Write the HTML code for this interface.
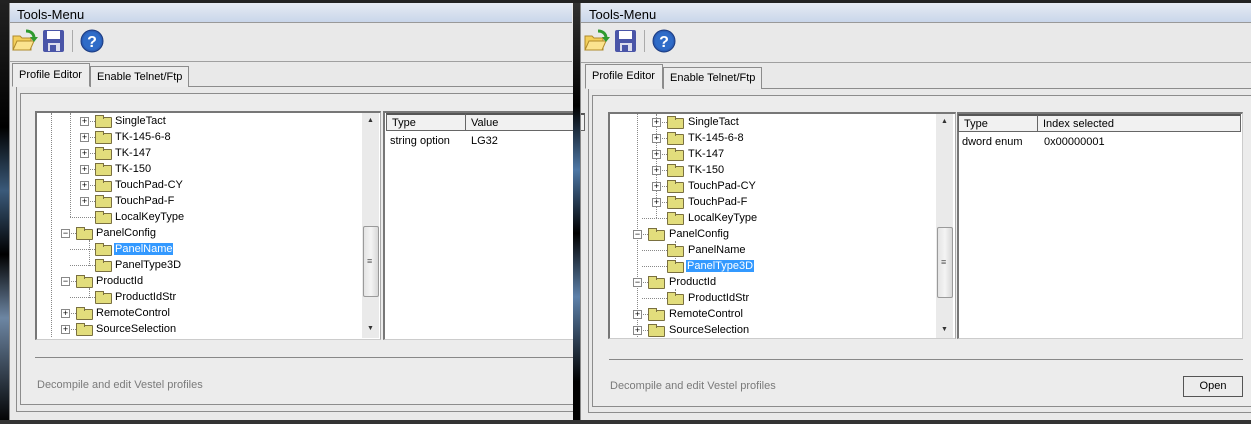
<!DOCTYPE html>
<html><head><meta charset="utf-8"><style>
*{margin:0;padding:0;box-sizing:border-box}
body{width:1251px;height:424px;overflow:hidden;background:#e9e9e9;font-family:"Liberation Sans",Arial,sans-serif;font-size:11px;color:#000;position:relative}
.a{position:absolute}
.title{height:20px;background:linear-gradient(#e6ebf3,#c9d6ea);border-bottom:1px solid #999;font-size:13px;padding:4px 0 0 7px}
.line{height:1px;background:#a0a0a0}
.tab{border:1px solid #8c8c8c;border-bottom:none;background:#ececec;font-size:11px;padding:5px 6px 0 6px;height:22px;white-space:nowrap}
.box{border:1px solid #8c8c8c;background:#e9e9e9}
.tree{background:#fff;border:2px solid #777;border-right:1px solid #aaa;border-bottom:1px solid #ccc;overflow:hidden}
.row{position:absolute;height:16px;line-height:16px;white-space:nowrap}
.pm{position:absolute;width:9px;height:9px;border:1px solid #888;background:#fff;top:4px;font-size:9px;line-height:7px;text-align:center;color:#000}
.fo{position:absolute;width:17px;height:11px;top:4px;background:#e2dd7c;border:1px solid #7a7040;border-radius:1px}
.fo:before{content:"";position:absolute;left:-1px;top:-3px;width:7px;height:3px;background:#e2dd7c;border:1px solid #7a7040;border-bottom:none}
.sel{background:#3399ff;color:#fff;padding:0 1px}
.dv{position:absolute;border-left:1px dotted #888}
.dh{position:absolute;border-top:1px dotted #888;height:0}
.sb{position:absolute;background:#eaeaea}
.thumb{position:absolute;background:linear-gradient(90deg,#e4e4e4,#f4f4f4,#d8d8d8);border:1px solid #9a9a9a;border-radius:2px}
.hdr{position:absolute;height:18px;background:#f1f1f1;border:1px solid #666;border-top:2px solid #555;padding:2px 5px;font-size:11px;white-space:nowrap}
.list{background:#fff;border:2px solid #777;border-right:1px solid #ccc;border-bottom:1px solid #ccc;overflow:hidden}
.st{color:#7a7a7a;font-size:11px}
</style></head><body>

<!-- LEFT WINDOW -->
<div class="a" style="left:9px;top:0;width:563px;height:421px;overflow:hidden;border-left:1px solid #888">
 <div class="a title" style="left:0;top:3px;width:600px">Tools-Menu</div>
</div>
<div class="a line" style="left:10px;top:61px;width:562px"></div>
<svg class="a" style="left:12px;top:28px" width="100" height="26" viewBox="0 0 100 26">
 <path d="M1 8h7l2 2h9v12H1z" fill="#f3cf5a" stroke="#b08a2a"/><path d="M1 22l4-9h17l-4 9z" fill="#fbe38e" stroke="#b08a2a"/>
 <path d="M14 3c5 0 8 3 8 7" fill="none" stroke="#2f9a2f" stroke-width="3"/><path d="M18 9l4 5 4-5z" fill="#2f9a2f"/>
 <rect x="31" y="2" width="21" height="22" rx="2" fill="#4a55a8"/><rect x="35" y="3" width="13" height="8" fill="#fff"/><rect x="36" y="15" width="12" height="8" fill="#dde"/><rect x="38" y="17" width="6" height="6" fill="#4a55a8"/>
 <rect x="60" y="2" width="1" height="22" fill="#aaa"/>
 <circle cx="80" cy="13" r="11" fill="#2b5fb8" stroke="#1a3a80"/><circle cx="80" cy="13" r="9" fill="#2f6cc8"/>
 <text x="80" y="19" text-anchor="middle" fill="#fff" font-size="16" font-weight="bold" font-family="Liberation Sans">?</text>
</svg>
<div class="a box" style="left:16px;top:86px;width:560px;height:326px"></div>
<div class="a box" style="left:20px;top:93px;width:556px;height:312px;background:#ececec"></div>
<div class="a tab" style="left:12px;top:63px;width:78px;height:24px;background:#ededed;z-index:2;border-bottom:1px solid #ededed">Profile Editor</div>
<div class="a tab" style="left:90px;top:66px;width:99px;height:21px;padding-top:4px">Enable Telnet/Ftp</div>
<div class="a tree" style="left:35px;top:111px;width:346px;height:229px"></div>
<div class="a list" style="left:383px;top:111px;width:195px;height:229px"></div>
<div class="hdr" style="left:386px;top:113px;width:80px">Type</div>
<div class="hdr" style="left:465px;top:113px;width:120px">Value</div>
<div class="a" style="left:390px;top:135px">string option</div>
<div class="a" style="left:471px;top:135px">LG32</div>
<div class="sb" style="left:362px;top:113px;width:17px;height:225px"></div>
<div class="a" style="left:367px;top:117px;font-size:7px;color:#333">▲</div>
<div class="a" style="left:367px;top:325px;font-size:7px;color:#333">▼</div>
<div class="thumb" style="left:363px;top:226px;width:16px;height:71px"></div>
<div class="a" style="left:367px;top:256px;font-size:9px;color:#555">≡</div>
<div class="a line" style="left:35px;top:357px;width:540px;background:#888"></div>
<div class="a st" style="left:37px;top:379px">Decompile and edit Vestel profiles</div>

<div class="dv" style="left:51px;top:113px;height:224px"></div>
<div class="dv" style="left:70px;top:113px;height:104px"></div>
<div class="dv" style="left:89px;top:240px;height:26px"></div>
<div class="dv" style="left:89px;top:288px;height:10px"></div>
<div class="row" style="left:80px;top:113px"><div class="pm" style="left:0">+</div><div class="dh" style="left:10px;top:8px;width:5px"></div><div class="fo" style="left:15px"></div><span style="margin-left:35px">SingleTact</span></div>
<div class="row" style="left:80px;top:129px"><div class="pm" style="left:0">+</div><div class="dh" style="left:10px;top:8px;width:5px"></div><div class="fo" style="left:15px"></div><span style="margin-left:35px">TK-145-6-8</span></div>
<div class="row" style="left:80px;top:145px"><div class="pm" style="left:0">+</div><div class="dh" style="left:10px;top:8px;width:5px"></div><div class="fo" style="left:15px"></div><span style="margin-left:35px">TK-147</span></div>
<div class="row" style="left:80px;top:161px"><div class="pm" style="left:0">+</div><div class="dh" style="left:10px;top:8px;width:5px"></div><div class="fo" style="left:15px"></div><span style="margin-left:35px">TK-150</span></div>
<div class="row" style="left:80px;top:177px"><div class="pm" style="left:0">+</div><div class="dh" style="left:10px;top:8px;width:5px"></div><div class="fo" style="left:15px"></div><span style="margin-left:35px">TouchPad-CY</span></div>
<div class="row" style="left:80px;top:193px"><div class="pm" style="left:0">+</div><div class="dh" style="left:10px;top:8px;width:5px"></div><div class="fo" style="left:15px"></div><span style="margin-left:35px">TouchPad-F</span></div>
<div class="row" style="left:80px;top:209px"><div class="dh" style="left:-10px;top:8px;width:25px"></div><div class="fo" style="left:15px"></div><span style="margin-left:35px">LocalKeyType</span></div>
<div class="row" style="left:61px;top:225px"><div class="pm" style="left:0">−</div><div class="dh" style="left:10px;top:8px;width:5px"></div><div class="fo" style="left:15px"></div><span style="margin-left:35px">PanelConfig</span></div>
<div class="row" style="left:80px;top:241px"><div class="dh" style="left:-10px;top:8px;width:25px"></div><div class="fo" style="left:15px"></div><span style="margin-left:34px" class="sel">PanelName</span></div>
<div class="row" style="left:80px;top:257px"><div class="dh" style="left:-10px;top:8px;width:25px"></div><div class="fo" style="left:15px"></div><span style="margin-left:35px">PanelType3D</span></div>
<div class="row" style="left:61px;top:273px"><div class="pm" style="left:0">−</div><div class="dh" style="left:10px;top:8px;width:5px"></div><div class="fo" style="left:15px"></div><span style="margin-left:35px">ProductId</span></div>
<div class="row" style="left:80px;top:289px"><div class="dh" style="left:-10px;top:8px;width:25px"></div><div class="fo" style="left:15px"></div><span style="margin-left:35px">ProductIdStr</span></div>
<div class="row" style="left:61px;top:305px"><div class="pm" style="left:0">+</div><div class="dh" style="left:10px;top:8px;width:5px"></div><div class="fo" style="left:15px"></div><span style="margin-left:35px">RemoteControl</span></div>
<div class="row" style="left:61px;top:321px"><div class="pm" style="left:0">+</div><div class="dh" style="left:10px;top:8px;width:5px"></div><div class="fo" style="left:15px"></div><span style="margin-left:35px">SourceSelection</span></div>

<!-- RIGHT WINDOW -->
<div class="a" style="left:580px;top:0;width:671px;height:421px;overflow:hidden;border-left:1px solid #888">
 <div class="a title" style="left:0;top:3px;width:680px;padding-left:8px">Tools-Menu</div>
</div>
<div class="a line" style="left:581px;top:62px;width:670px"></div>
<svg class="a" style="left:584px;top:28px" width="100" height="26" viewBox="0 0 100 26">
 <path d="M1 8h7l2 2h9v12H1z" fill="#f3cf5a" stroke="#b08a2a"/><path d="M1 22l4-9h17l-4 9z" fill="#fbe38e" stroke="#b08a2a"/>
 <path d="M14 3c5 0 8 3 8 7" fill="none" stroke="#2f9a2f" stroke-width="3"/><path d="M18 9l4 5 4-5z" fill="#2f9a2f"/>
 <rect x="31" y="2" width="21" height="22" rx="2" fill="#4a55a8"/><rect x="35" y="3" width="13" height="8" fill="#fff"/><rect x="36" y="15" width="12" height="8" fill="#dde"/><rect x="38" y="17" width="6" height="6" fill="#4a55a8"/>
 <rect x="60" y="2" width="1" height="22" fill="#aaa"/>
 <circle cx="80" cy="13" r="11" fill="#2b5fb8" stroke="#1a3a80"/><circle cx="80" cy="13" r="9" fill="#2f6cc8"/>
 <text x="80" y="19" text-anchor="middle" fill="#fff" font-size="16" font-weight="bold" font-family="Liberation Sans">?</text>
</svg>
<div class="a box" style="left:588px;top:88px;width:670px;height:325px"></div>
<div class="a box" style="left:592px;top:95px;width:665px;height:312px;background:#ececec"></div>
<div class="a tab" style="left:585px;top:64px;width:78px;height:25px;background:#ededed;z-index:2;border-bottom:1px solid #ededed">Profile Editor</div>
<div class="a tab" style="left:663px;top:67px;width:99px;height:22px;padding-top:4px">Enable Telnet/Ftp</div>
<div class="a tree" style="left:608px;top:112px;width:348px;height:227px"></div>
<div class="a list" style="left:957px;top:112px;width:286px;height:227px"></div>
<div class="hdr" style="left:958px;top:114px;width:80px">Type</div>
<div class="hdr" style="left:1037px;top:114px;width:204px">Index selected</div>
<div class="a" style="left:962px;top:136px">dword enum</div>
<div class="a" style="left:1044px;top:136px">0x00000001</div>
<div class="sb" style="left:936px;top:114px;width:17px;height:224px"></div>
<div class="a" style="left:941px;top:118px;font-size:7px;color:#333">▲</div>
<div class="a" style="left:941px;top:326px;font-size:7px;color:#333">▼</div>
<div class="thumb" style="left:937px;top:227px;width:16px;height:71px"></div>
<div class="a" style="left:941px;top:257px;font-size:9px;color:#555">≡</div>
<div class="a line" style="left:609px;top:359px;width:634px;background:#888"></div>
<div class="a st" style="left:610px;top:380px">Decompile and edit Vestel profiles</div>
<div class="a" style="left:1183px;top:376px;width:60px;height:21px;border:1px solid #555;background:#ececec;text-align:center;line-height:19px">Open</div>

<div class="dv" style="left:637px;top:114px;height:223px"></div>
<div class="dv" style="left:656px;top:114px;height:104px"></div>
<div class="dv" style="left:675px;top:241px;height:26px"></div>
<div class="dv" style="left:675px;top:289px;height:10px"></div>
<div class="row" style="left:652px;top:114px"><div class="pm" style="left:0">+</div><div class="dh" style="left:10px;top:8px;width:5px"></div><div class="fo" style="left:15px"></div><span style="margin-left:36px">SingleTact</span></div>
<div class="row" style="left:652px;top:130px"><div class="pm" style="left:0">+</div><div class="dh" style="left:10px;top:8px;width:5px"></div><div class="fo" style="left:15px"></div><span style="margin-left:36px">TK-145-6-8</span></div>
<div class="row" style="left:652px;top:146px"><div class="pm" style="left:0">+</div><div class="dh" style="left:10px;top:8px;width:5px"></div><div class="fo" style="left:15px"></div><span style="margin-left:36px">TK-147</span></div>
<div class="row" style="left:652px;top:162px"><div class="pm" style="left:0">+</div><div class="dh" style="left:10px;top:8px;width:5px"></div><div class="fo" style="left:15px"></div><span style="margin-left:36px">TK-150</span></div>
<div class="row" style="left:652px;top:178px"><div class="pm" style="left:0">+</div><div class="dh" style="left:10px;top:8px;width:5px"></div><div class="fo" style="left:15px"></div><span style="margin-left:36px">TouchPad-CY</span></div>
<div class="row" style="left:652px;top:194px"><div class="pm" style="left:0">+</div><div class="dh" style="left:10px;top:8px;width:5px"></div><div class="fo" style="left:15px"></div><span style="margin-left:36px">TouchPad-F</span></div>
<div class="row" style="left:652px;top:210px"><div class="dh" style="left:-10px;top:8px;width:25px"></div><div class="fo" style="left:15px"></div><span style="margin-left:36px">LocalKeyType</span></div>
<div class="row" style="left:633px;top:226px"><div class="pm" style="left:0">−</div><div class="dh" style="left:10px;top:8px;width:5px"></div><div class="fo" style="left:15px"></div><span style="margin-left:36px">PanelConfig</span></div>
<div class="row" style="left:652px;top:242px"><div class="dh" style="left:-10px;top:8px;width:25px"></div><div class="fo" style="left:15px"></div><span style="margin-left:36px">PanelName</span></div>
<div class="row" style="left:652px;top:258px"><div class="dh" style="left:-10px;top:8px;width:25px"></div><div class="fo" style="left:15px"></div><span style="margin-left:34px" class="sel">PanelType3D</span></div>
<div class="row" style="left:633px;top:274px"><div class="pm" style="left:0">−</div><div class="dh" style="left:10px;top:8px;width:5px"></div><div class="fo" style="left:15px"></div><span style="margin-left:36px">ProductId</span></div>
<div class="row" style="left:652px;top:290px"><div class="dh" style="left:-10px;top:8px;width:25px"></div><div class="fo" style="left:15px"></div><span style="margin-left:36px">ProductIdStr</span></div>
<div class="row" style="left:633px;top:306px"><div class="pm" style="left:0">+</div><div class="dh" style="left:10px;top:8px;width:5px"></div><div class="fo" style="left:15px"></div><span style="margin-left:36px">RemoteControl</span></div>
<div class="row" style="left:633px;top:322px"><div class="pm" style="left:0">+</div><div class="dh" style="left:10px;top:8px;width:5px"></div><div class="fo" style="left:15px"></div><span style="margin-left:36px">SourceSelection</span></div>

<!-- dark frames on top -->
<div class="a" style="left:0;top:0;width:9px;height:424px;background:linear-gradient(#222,#000 30%,#3b5a7a 45%,#000 60%,#6d86a3 75%,#000);z-index:10"></div>
<div class="a" style="left:573px;top:0;width:7px;height:424px;background:linear-gradient(#333,#000 25%,#4d77a5 40%,#000 55%,#5d81aa 70%,#000 90%);z-index:10"></div>
<div class="a" style="left:0;top:0;width:1251px;height:3px;background:#222;z-index:10"></div>
<div class="a" style="left:0;top:420px;width:1251px;height:4px;background:#333;z-index:10"></div>
</body></html>
